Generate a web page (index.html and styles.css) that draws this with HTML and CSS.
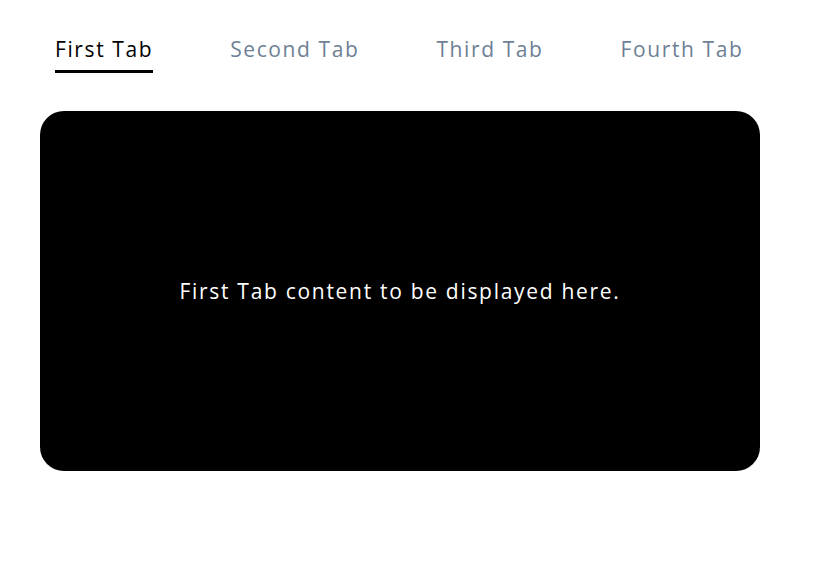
FILE: index.html
```html
<!DOCTYPE html>
<html lang="en">
<head>
<meta charset="utf-8">
<title>Tabs</title>
<link rel="stylesheet" href="styles.css">
</head>
<body>
<div class="tabs">
  <nav class="tab-list">
    <button class="tab active"><span class="tab-label">First Tab</span></button>
    <button class="tab"><span class="tab-label">Second Tab</span></button>
    <button class="tab"><span class="tab-label">Third Tab</span></button>
    <button class="tab"><span class="tab-label">Fourth Tab</span></button>
  </nav>
  <section class="tab-panel">
    <p class="panel-text">First Tab content to be displayed here.</p>
  </section>
</div>
</body>
</html>
```

FILE: styles.css
```css
html, body {
  margin: 0;
  padding: 0;
  background: #ffffff;
}

body {
  font-family: "Open Sans", "Noto Sans", sans-serif;
}

.tabs {
  padding: 36px 0 0 40px;
  width: 720px;
}

.tab-list {
  display: flex;
  gap: 77px;
  padding-left: 15px;
}

.tab {
  background: none;
  border: 0;
  padding: 0;
  margin: 0;
  font: inherit;
  font-size: 21px;
  letter-spacing: 1.6px;
  color: #6e7f95;
  cursor: pointer;
}

.tab-label {
  display: block;
  padding-bottom: 8px;
  border-bottom: 3px solid transparent;
  line-height: 26px;
}

.tab.active {
  color: #000000;
}

.tab.active .tab-label {
  border-bottom-color: #000000;
}

.tab-panel {
  margin-top: 38px;
  height: 360px;
  background: #000000;
  border-radius: 24px;
  display: flex;
  align-items: center;
  justify-content: center;
}

.panel-text {
  margin: 0;
  color: #ffffff;
  font-size: 21px;
  letter-spacing: 1.7px;
}
```
